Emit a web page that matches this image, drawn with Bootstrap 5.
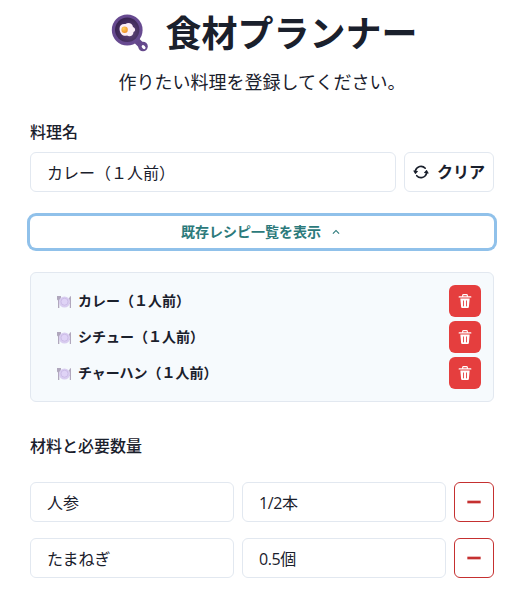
<!DOCTYPE html>
<html lang="ja">
<head>
<meta charset="utf-8">
<meta name="viewport" content="width=device-width, initial-scale=1">
<title>食材プランナー</title>
<link href="https://cdn.jsdelivr.net/npm/bootstrap@5.3.0/dist/css/bootstrap.min.css" rel="stylesheet">
<style>
body{font-family:"Open Sans","Noto Sans CJK JP",sans-serif;color:#1a202c;background:#fff;overflow:hidden}
.planner{padding:7px 20px 0 30px}
.planner-title{font-family:"Noto Sans CJK JP",sans-serif;font-size:36px;line-height:48px;font-weight:700;gap:16px;padding-left:4px}
.planner-title svg{margin-top:5px}
.planner-lead{font-size:18px;line-height:28px;margin:13px 0 24px}
.form-label{font-size:16px;line-height:24px;font-weight:500;margin-bottom:8px}
.form-control,.btn-clear,.btn-minus{height:40px;border:1px solid #e2e8f0;border-radius:6px}
.form-control{padding:0 16px;font-size:16px;color:#1a202c}
.amount{letter-spacing:-.4px}
.btn-clear{width:90px;font-size:16px;font-weight:600;color:#1a202c;gap:8px}
.btn-minus{width:40px;border-color:#c53030;color:#c53030}
.btn-toggle{height:32px;margin-top:24px;padding:0 0 2px;font-size:14px;font-weight:600;color:#2c7a7b;border:0;border-radius:6px;box-shadow:0 0 0 3px #90c1ea;gap:8px}
.btn-toggle svg{margin-top:2px}
.recipe-box{margin-top:24px;padding:12px;background:#f6fafd;border:1px solid #e2e8f0;border-radius:6px}
.recipe-name{font-size:14px;font-weight:600;padding:0 0 2px 14px;gap:6px}
.recipe-name svg{margin-top:3px}
.btn-delete{width:32px;height:32px;background:#e53e3e;color:#fff;border-radius:6px}
.ingredients-label{margin:32px 0 24px}
</style>
<script src="https://cdn.jsdelivr.net/npm/bootstrap@5.3.0/dist/js/bootstrap.bundle.min.js"></script>
</head>
<body>
<svg class="d-none" xmlns="http://www.w3.org/2000/svg">
<symbol id="trash" viewBox="0 0 24 24"><path fill="currentColor" d="M19.452 7.5H4.547a.5.5 0 00-.5.545l1.287 14.136A2 2 0 007.326 24h9.347a2 2 0 001.992-1.819L19.95 8.045a.5.5 0 00-.129-.382.5.5 0 00-.369-.163zm-9.2 13a.75.75 0 01-1.5 0v-9a.75.75 0 011.5 0zm5 0a.75.75 0 01-1.5 0v-9a.75.75 0 011.5 0zM22 4h-4.75a.25.25 0 01-.25-.25V2.5A2.5 2.5 0 0014.5 0h-5A2.5 2.5 0 007 2.5v1.25a.25.25 0 01-.25.25H2a1 1 0 000 2h20a1 1 0 000-2zM9 3.75V2.5a.5.5 0 01.5-.5h5a.5.5 0 01.5.5v1.25a.25.25 0 01-.25.25h-5.5A.25.25 0 019 3.75z"/></symbol>
<symbol id="plate" viewBox="0 0 15 14">
<path fill="#b0a7bd" d="M0 1h4v3.600L2.300 5.500V13H1V5.400L0 4.500zM14 1v12h-1.200V9L11.300 8.200C11.300 4.500 12.300 1.500 14 1z"/>
<circle cx="7.500" cy="7" r="5.600" fill="#d9cdf0"/><circle cx="7.500" cy="6.700" r="3.500" fill="#dfd3f6" stroke="#c6b5e3" stroke-width=".7"/></symbol>
<symbol id="minus" viewBox="0 0 24 24"><rect x="2" y="10" width="20" height="4" fill="currentColor"/></symbol>
</svg>
<main class="planner">
<h1 class="planner-title d-flex justify-content-center align-items-center mb-0">
<svg width="39" height="39" viewBox="0 0 39 39" aria-hidden="true">
<defs><radialGradient id="pan" cx=".6" cy=".6" r=".6"><stop offset="0" stop-color="#62477d"/><stop offset="1" stop-color="#392452"/></radialGradient><radialGradient id="yolk" cx=".35" cy=".3" r=".8"><stop offset="0" stop-color="#ffcf5a"/><stop offset="1" stop-color="#ee8b25"/></radialGradient></defs>
<path d="M25 25L32 32" stroke="#64488b" stroke-width="6.500"/>
<circle cx="33" cy="32.500" r="4.800" fill="#65498c"/><ellipse cx="33.600" cy="33.100" rx="2.300" ry="1.500" fill="#fff" transform="rotate(45 33.600 33.100)"/>
<circle cx="17.200" cy="16" r="15.400" fill="#674a90"/><circle cx="17.200" cy="15.800" r="12.200" fill="url(#pan)"/>
<path fill="#fbeef7" d="M9.500 15C9.500 11 12 9.500 15.500 10c3-2 7-.5 7.500 3 2.500 1 3 4 .5 5 0 4-4 5-6.500 3.500-3 1-7-.5-7.500-6.500z"/>
<circle cx="14.600" cy="15.800" r="3.200" fill="url(#yolk)"/>
</svg><span>食材プランナー</span></h1>
<p class="planner-lead text-center">作りたい料理を登録してください。</p>
<label class="form-label d-block" for="dish">料理名</label>
<div class="d-flex gap-2">
<input id="dish" class="form-control" value="カレー（１人前）">
<button class="btn btn-clear d-flex flex-shrink-0 align-items-center justify-content-center p-0" type="button">
<svg width="16" height="16" viewBox="0 0 24 24" fill="currentColor"><path d="M10.319,4.936a7.239,7.239,0,0,1,7.1,2.252,1.25,1.25,0,1,0,1.872-1.657A9.737,9.737,0,0,0,9.743,2.5,10.269,10.269,0,0,0,2.378,9.61a.249.249,0,0,1-.271.178l-1.033-.13A.491.491,0,0,0,.6,9.877a.5.5,0,0,0-.019.526l2.476,4.342a.5.5,0,0,0,.373.248.43.43,0,0,0,.062,0,.5.5,0,0,0,.359-.152l3.477-3.593a.5.5,0,0,0-.3-.844L5.15,10.172a.25.25,0,0,1-.2-.333A7.7,7.7,0,0,1,10.319,4.936Z"/><path d="M23.406,14.1a.5.5,0,0,0,.015-.526l-2.5-4.329A.5.5,0,0,0,20.546,9a.489.489,0,0,0-.421.151l-3.456,3.614a.5.5,0,0,0,.3.842l1.848.221a.249.249,0,0,1,.183.117.253.253,0,0,1,.023.216,7.688,7.688,0,0,1-5.369,4.9,7.243,7.243,0,0,1-7.1-2.253,1.25,1.25,0,1,0-1.872,1.656,9.74,9.74,0,0,0,9.549,3.03,10.261,10.261,0,0,0,7.369-7.12.251.251,0,0,1,.27-.179l1.058.127a.422.422,0,0,0,.06,0A.5.5,0,0,0,23.406,14.1Z"/></svg>クリア</button>
</div>
<button class="btn btn-toggle w-100 d-flex align-items-center justify-content-center" type="button">既存レシピ一覧を表示<svg width="14" height="14" viewBox="0 0 24 24" fill="currentColor"><path d="M12 8l-6 6 1.410 1.410L12 10.830l4.590 4.580L18 14z"/></svg></button>
<section class="recipe-box d-flex flex-column gap-1">
<div class="d-flex justify-content-between">
<div class="recipe-name d-flex align-items-center"><svg width="15" height="14"><use href="#plate"/></svg>カレー（１人前）</div>
<button class="btn btn-delete d-flex align-items-center justify-content-center border-0 p-0" aria-label="削除"><svg width="14" height="14"><use href="#trash"/></svg></button>
</div>
<div class="d-flex justify-content-between">
<div class="recipe-name d-flex align-items-center"><svg width="15" height="14"><use href="#plate"/></svg>シチュー（１人前）</div>
<button class="btn btn-delete d-flex align-items-center justify-content-center border-0 p-0" aria-label="削除"><svg width="14" height="14"><use href="#trash"/></svg></button>
</div>
<div class="d-flex justify-content-between">
<div class="recipe-name d-flex align-items-center"><svg width="15" height="14"><use href="#plate"/></svg>チャーハン（１人前）</div>
<button class="btn btn-delete d-flex align-items-center justify-content-center border-0 p-0" aria-label="削除"><svg width="14" height="14"><use href="#trash"/></svg></button>
</div>
</section>
<div class="form-label ingredients-label">材料と必要数量</div>
<div class="d-flex flex-column gap-3">
<div class="d-flex gap-2">
<input class="form-control" value="人参" aria-label="材料"><input class="form-control amount" value="1/2本" aria-label="数量">
<button class="btn btn-minus d-flex flex-shrink-0 align-items-center justify-content-center p-0" aria-label="減らす"><svg width="16" height="16"><use href="#minus"/></svg></button>
</div>
<div class="d-flex gap-2">
<input class="form-control" value="たまねぎ" aria-label="材料"><input class="form-control amount" value="0.5個" aria-label="数量">
<button class="btn btn-minus d-flex flex-shrink-0 align-items-center justify-content-center p-0" aria-label="減らす"><svg width="16" height="16"><use href="#minus"/></svg></button>
</div>
</div>
</main>
</body>
</html>
